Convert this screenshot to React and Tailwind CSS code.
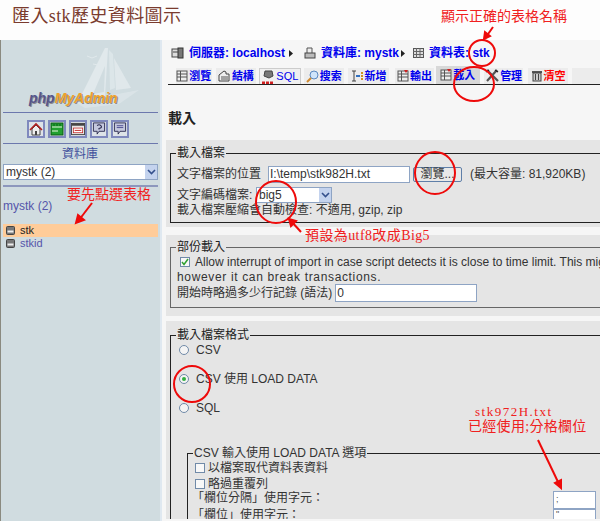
import React from 'react';

const SANS = "font-['Liberation_Sans','Noto_Sans_CJK_TC',sans-serif]";
const SERIF = "font-['Liberation_Serif','Noto_Sans_CJK_TC',serif]";

const Ship = () => (
  <svg width="72" height="66" viewBox="0 0 72 66" className="absolute left-[66px] top-[4px]">
    <g fill="#e1e9ec">
      <polygon points="36,4 39,4 36,52 12,52" />
      <polygon points="45,14 47,46 62,44" opacity="0.9" />
      <polygon points="36,22 24,50 35,48" fill="#d0dce0" />
      <polygon points="40,6 44,10 46,44 41,46" opacity="0.7" />
      <polygon points="6,58 70,46 50,60 16,64" opacity="0.55" />
    </g>
    <path d="M18 12l5 2 5-2M24 20l5 1" stroke="#e1e9ec" fill="none" />
  </svg>
);

const NavButton = ({ children }) => (
  <div className="w-[18px] h-[18px] border-2 border-[#7f89bd] bg-[#dde3e8] flex items-center justify-center">
    {children}
  </div>
);

const HomeIcon = () => (
  <svg width="14" height="14" viewBox="0 0 14 14">
    <path d="M3 7v6h8V7L7 3z" fill="#eee" stroke="#444" />
    <path d="M1 8l6-6 6 6" fill="none" stroke="#b02020" strokeWidth="1.6" />
    <rect x="6" y="9" width="2" height="4" fill="#444" />
  </svg>
);
const GridIcon = () => (
  <svg width="14" height="14" viewBox="0 0 14 14">
    <rect x="1" y="1" width="12" height="12" fill="#22a030" stroke="#0a5a14" />
    <path d="M2 5h10M2 9h6" stroke="#e8f8e0" />
    <path d="M4 2v2M7 2v2M10 2v2" stroke="#0a5a14" />
  </svg>
);
const SqlWindow = () => (
  <svg width="15" height="14" viewBox="0 0 15 14">
    <rect x="0.5" y="1" width="14" height="12" fill="#e8e8e8" stroke="#444" />
    <rect x="1" y="1" width="13" height="2.5" fill="#444" />
    <rect x="2.5" y="6" width="10" height="5" fill="#fff" stroke="#c02020" strokeWidth="0.8" />
    <path d="M4 8.5h7" stroke="#c02020" />
  </svg>
);
const Bubble = ({ mark }) => (
  <svg width="15" height="15" viewBox="0 0 15 15">
    <path d="M1.5 1.5h12v9h-6l-2 3v-3h-4z" fill="#c4c8de" stroke="#2c2c50" />
    {mark === 'q' ? (
      <path d="M5.5 4.5q2-2 4 0t-2 3v1" fill="none" stroke="#2c2c50" strokeWidth="1.2" />
    ) : (
      <path d="M4 4.5h7M4 6.5h7" stroke="#4a4a90" />
    )}
  </svg>
);
const TableRowIcon = () => (
  <svg width="9" height="9" viewBox="0 0 9 9">
    <rect x="0.5" y="0.5" width="8" height="8" rx="1" fill="#777" stroke="#444" />
    <rect x="1.5" y="4.5" width="6" height="2" fill="#eee" />
  </svg>
);

const Sidebar = () => (
  <div className="w-[160px] shrink-0 bg-[#d0dce0] border-l border-[#8a8a80] flex flex-col">
    <div className="relative h-[73px] mx-[2px] border-b border-[#6c78ad]">
      <Ship />
      <div className="absolute left-[26px] top-[50px] text-[14px] leading-4 font-bold italic whitespace-nowrap font-['Liberation_Sans',sans-serif] [text-shadow:1px_1px_0_#8c8c90]">
        <span className="text-[#56568c]">php</span>
        <span className="text-[#eda22d]">MyAdmin</span>
      </div>
    </div>
    <div className="h-[31px] mx-[2px] border-b border-[#6c78ad] flex items-center pl-[24px] pt-[1px] gap-[3px]">
      <NavButton><HomeIcon /></NavButton>
      <NavButton><GridIcon /></NavButton>
      <NavButton><SqlWindow /></NavButton>
      <NavButton><Bubble mark="q" /></NavButton>
      <NavButton><Bubble mark="s" /></NavButton>
    </div>
    <div className="text-center text-[12px] leading-[20px] text-[#40509c] pr-[1px]">資料庫</div>
    <div className="h-[16px] mx-[2px] bg-white border border-[#8ea4c4] flex items-center justify-between pl-[2px] text-[12px] text-[#333]">
      <span>mystk (2)</span>
      <span className="w-[12px] h-[14px] bg-[#c4d3ee] flex items-center justify-center">
        <svg width="9" height="6" viewBox="0 0 9 6"><path d="M1 1l3.5 3.5L8 1" fill="none" stroke="#34508c" strokeWidth="1.6" /></svg>
      </span>
    </div>
    <div className="mx-[2px] mt-[5px] border-t-2 border-[#8d97bd]" />
    <div className="ml-[2px] mt-[11px] text-[12px] leading-4 text-[#5555aa]">mystk (2)</div>
    <div className="mt-[10px] mx-[2px] h-[13px] bg-[#ffcc99] flex items-center gap-[5px] pl-[3px] text-[11px] text-[#222]">
      <TableRowIcon />
      <span>stk</span>
    </div>
    <div className="mx-[2px] h-[12px] flex items-center gap-[5px] pl-[3px] text-[11px] text-[#5555aa]">
      <TableRowIcon />
      <span>stkid</span>
    </div>
  </div>
);

const Crumb = ({ icon, label }) => (
  <div className="flex items-center gap-[5px]">
    {icon}
    <span>{label}</span>
  </div>
);
const Triangle = ({ className }) => (
  <svg width="4" height="7" viewBox="0 0 4 7" className={`mt-[1px] ${className}`}><path d="M0 0l4 3.5L0 7z" fill="#222" /></svg>
);
const ServerIcon = () => (
  <svg width="13" height="12" viewBox="0 0 13 12">
    <rect x="1" y="2" width="7" height="8" fill="#ddd" stroke="#444" />
    <rect x="7" y="1" width="5" height="10" fill="#777" stroke="#333" />
    <path d="M2 5h5" stroke="#444" />
  </svg>
);
const DbIcon = () => (
  <svg width="12" height="12" viewBox="0 0 12 12">
    <path d="M3 1h5v6H3z" fill="#eee" stroke="#555" />
    <rect x="1" y="6" width="10" height="5" fill="#bbb" stroke="#444" />
  </svg>
);
const TableIcon = () => (
  <svg width="11" height="10" viewBox="0 0 11 10">
    <rect x="0.5" y="0.5" width="10" height="9" fill="#ddd" stroke="#555" />
    <path d="M0 3.5h11M0 6.5h11M3.5 0v10M7 0v10" stroke="#666" />
  </svg>
);

const ListIcon = ({ red }) => (
  <svg width="12" height="12" viewBox="0 0 12 12">
    <rect x="1" y="1" width="10" height="10" fill="#eee" stroke="#555" />
    <path d="M1 4h10M1 7h10M4.5 1v10" stroke="#555" />
    {red && <path d="M7 0h4L9 3z" fill="#d02020" />}
  </svg>
);
const StructIcon = () => (
  <svg width="13" height="12" viewBox="0 0 13 12">
    <path d="M1 5l5-4 2 1v2h3v7H1z" fill="#eee" stroke="#444" />
    <path d="M3 7h7M3 9h7" stroke="#555" />
  </svg>
);
const SqlTabIcon = () => (
  <svg width="14" height="14" viewBox="0 0 14 14">
    <path d="M4 1h7l1 5-4 2-5-2z" fill="#777" stroke="#444" />
    <path d="M1 13h12" stroke="#d02020" strokeWidth="3" strokeDasharray="3 1" />
  </svg>
);
const SearchIcon = () => (
  <svg width="13" height="13" viewBox="0 0 13 13">
    <circle cx="8" cy="5" r="4" fill="#cfe4fa" stroke="#5a88c0" />
    <path d="M5 8l-4 4" stroke="#d08a30" strokeWidth="2" />
  </svg>
);
const InsertIcon = () => (
  <svg width="13" height="12" viewBox="0 0 13 12">
    <path d="M3 1v10M1 1h4M1 11h4" stroke="#444" />
    <path d="M5 6h4" stroke="#3070c0" strokeWidth="2" />
    <path d="M10 3h2M10 6h2M10 9h2" stroke="#d09020" strokeWidth="2" />
  </svg>
);
const ToolsIcon = () => (
  <svg width="14" height="14" viewBox="0 0 14 14">
    <path d="M2 1l11 11M12 1L2 12" stroke="#555" strokeWidth="2.2" />
    <path d="M1 3l3-2M10 1l3 2" stroke="#222" strokeWidth="1.5" />
  </svg>
);
const TrashIcon = () => (
  <svg width="12" height="12" viewBox="0 0 12 12">
    <rect x="1" y="1" width="10" height="2" fill="#555" />
    <rect x="2" y="3" width="8" height="8" fill="#ccc" stroke="#444" />
    <path d="M4.5 4v6M7.5 4v6" stroke="#444" />
  </svg>
);

const tabs = [
  { label: '瀏覽', icon: <ListIcon />, box: 'w-[38px] h-[16px] bg-[#ececec]' },
  { label: '結構', icon: <StructIcon />, box: 'w-[43px] ml-[4px] h-[16px] bg-[#ececec]' },
  { label: 'SQL', icon: <SqlTabIcon />, box: 'w-[44px] ml-[3px] h-[16px] bg-[#f0f0f0] border border-b-0 border-[#ccc]', sql: true },
  { label: '搜索', icon: <SearchIcon />, box: 'w-[43px] ml-[3px] h-[16px] bg-[#ececec]' },
  { label: '新增', icon: <InsertIcon />, box: 'w-[44px] ml-[4px] h-[16px] bg-[#ececec]' },
  { label: '輸出', icon: <ListIcon red />, box: 'w-[41px] ml-[6px] h-[16px] bg-[#ececec]' },
  { label: '載入', icon: <ListIcon red />, box: 'w-[47px] ml-[2px] h-[18px] bg-[#d8d8d8]' },
  { label: '管理', icon: <ToolsIcon />, box: 'w-[42px] ml-[4px] h-[16px] bg-[#ececec]' },
  { label: '清空', icon: <TrashIcon />, box: 'w-[42px] ml-[5px] h-[16px] bg-[#ececec]', red: true },
  { label: '', icon: null, box: 'w-[30px] ml-[4px] h-[16px] bg-[#ececec]' },
];

const Tabs = () => (
  <div className="ml-[6px] flex items-end h-[18px] border-b border-[#222] box-content pl-[8px]">
    {tabs.map((t, i) => (
      <div
        key={i}
        className={`flex items-center justify-center gap-[1px] text-[11px] font-bold whitespace-nowrap ${t.box} ${t.red ? 'text-[#ff0000]' : 'text-[#0000ee]'}`}
      >
        {t.icon}
        <span className={t.sql ? 'font-normal text-[11px]' : ''}>{t.label}</span>
      </div>
    ))}
  </div>
);

const Group = ({ title, tone = 'border-[#222]', className, inner, children }) => (
  <div className={`bg-[#e5e5e5] pl-[4px] w-[480px] overflow-hidden ${className}`}>
    <fieldset className={`border ${tone} w-[470px] pl-[6px] ${inner}`}>
      <legend className="px-[1px] -ml-[1px] text-[12px] leading-[14px] text-[#222]">{title}</legend>
      {children}
    </fieldset>
  </div>
);

const TextBox = ({ value, className }) => (
  <div className={`bg-white border border-[#8ea4c4] flex items-center pl-[1px] text-[12px] text-[#333] ${className}`}>{value}</div>
);
const Check = ({ on }) => (
  <span className="w-[10px] h-[10px] bg-[#f8f8f8] border border-[#708aa8] flex items-center justify-center shrink-0">
    {on && <svg width="8" height="8" viewBox="0 0 8 8"><path d="M1 4l2 2.5L7 1" fill="none" stroke="#30a030" strokeWidth="1.5" /></svg>}
  </span>
);
const Radio = ({ on, label }) => (
  <div className="flex items-center gap-[7px] h-[14px] text-[12px] text-[#333] ml-[2px] whitespace-nowrap">
    <span className="w-[10px] h-[10px] rounded-full bg-[#f4f4f4] border border-[#708aa8] flex items-center justify-center">
      {on && <span className="w-[4px] h-[4px] rounded-full bg-[#30b040]" />}
    </span>
    {label}
  </div>
);

const Main = () => (
  <div className="flex-1 min-w-0 bg-[#f6f6f6] border-l-2 border-[#dfe8f0] overflow-hidden h-[481px]">
    <div className="h-[26px] pl-[9px] flex items-center text-[12px] font-bold text-[#0000ee] whitespace-nowrap">
      <Crumb icon={<ServerIcon />} label="伺服器: localhost" />
      <Triangle className="ml-[4px] mr-[11px]" />
      <Crumb icon={<DbIcon />} label="資料庫: mystk" />
      <Triangle className="ml-[2px] mr-[8px]" />
      <Crumb icon={<TableIcon />} label="資料表: stk" />
    </div>
    <Tabs />
    <div className="ml-[6px] mt-[24px] h-[18px] text-[14px] leading-[18px] font-bold text-[#222]">載入</div>
    <div className="mt-[13px]">
      <Group title="載入檔案" className="h-[87px] ml-[4px] pt-[6px]" inner="pb-[4px]">
        <div className="flex items-center text-[12px] text-[#333] whitespace-nowrap h-[18px] mt-[5px]">
          <span className="w-[91px]">文字檔案的位置</span>
          <TextBox value="I:\temp\stk982H.txt" className="w-[142px] h-[17px]" />
          <span className="ml-[3px] w-[49px] h-[15px] bg-[#e8e8e8] border border-[#5f7fa8] rounded-[2px] flex items-center justify-center">瀏覽...</span>
          <span className="ml-[8px]">(最大容量: 81,920KB)</span>
        </div>
        <div className="flex items-center text-[12px] text-[#333] whitespace-nowrap h-[16px] mt-[4px]">
          <span className="w-[79px]">文字編碼檔案:</span>
          <div className="w-[76px] h-[16px] bg-white border border-[#8ea4c4] flex items-center justify-between pl-[2px]">
            <span>big5</span>
            <span className="w-[12px] h-[14px] bg-[#c4d3ee] flex items-center justify-center">
              <svg width="9" height="6" viewBox="0 0 9 6"><path d="M1 1l3.5 3.5L8 1" fill="none" stroke="#34508c" strokeWidth="1.6" /></svg>
            </span>
          </div>
        </div>
        <div className="text-[12px] leading-[15px] text-[#333] whitespace-nowrap">載入檔案壓縮會自動檢查: 不適用, gzip, zip</div>
      </Group>
      <Group title="部份載入" tone="border-[#666]" className="h-[81px] ml-[4px] mt-[8px] pt-[5px]" inner="pb-[5px]">
        <div className="flex items-center gap-[5px] ml-[3px] h-[16px] text-[12px] text-[#333] whitespace-nowrap">
          <Check on />
          <span>Allow interrupt of import in case script detects it is close to time limit. This might be a good way to import large files,</span>
        </div>
        <div className="text-[12px] leading-[14px] tracking-[0.65px] text-[#333] whitespace-nowrap">however it can break transactions.</div>
        <div className="flex items-center gap-[3px] text-[12px] text-[#333] whitespace-nowrap h-[18px]">
          <span>開始時略過多少行記錄 (語法)</span>
          <TextBox value="0" className="w-[142px] h-[18px]" />
        </div>
      </Group>
      <Group title="載入檔案格式" className="h-[198px] ml-[4px] mt-[5px] pt-[7px]" inner="h-[260px]">
        <div className="flex flex-col gap-[15px] mt-[1px]">
          <Radio label="CSV" />
          <Radio on label="CSV 使用 LOAD DATA" />
          <Radio label="SQL" />
        </div>
        <fieldset className="border border-[#222] ml-[10px] mt-[31px] h-[160px] pl-[7px] w-[440px]">
          <legend className="px-[1px] -ml-[2px] text-[12px] leading-[14px] text-[#333] whitespace-nowrap">CSV 輸入使用 LOAD DATA 選項</legend>
          <div className="flex items-center gap-[3px] h-[16px] text-[12px] text-[#333]"><Check />以檔案取代資料表資料</div>
          <div className="flex items-center gap-[3px] h-[15px] text-[12px] text-[#333]"><Check />略過重覆列</div>
          <div className="flex items-start">
            <div className="w-[361px] text-[12px] text-[#333] whitespace-nowrap -ml-[3px]">
              <div className="h-[17px] leading-[15px]">「欄位分隔」使用字元：</div>
              <div className="h-[17px] leading-[15px]">「欄位」使用字元：</div>
            </div>
            <div className="flex flex-col">
              <div className="w-[43px] h-[18px] bg-white border border-[#8ea4c4] text-[9px] leading-[9px] pl-[2px] pt-[3px] text-[#555]">;</div>
              <div className="w-[43px] h-[18px] bg-white border border-[#8ea4c4] text-[9px] leading-[9px] pl-[2px] text-[#555]">"</div>
            </div>
          </div>
        </fieldset>
      </Group>
    </div>
  </div>
);

const Note = ({ className, children }) => (
  <div className={`absolute text-[#f02020] whitespace-nowrap ${SERIF} ${className}`}>{children}</div>
);

const Markup = () => (
  <>
    <svg width="600" height="521" viewBox="0 0 600 521" className="absolute inset-0 pointer-events-none" fill="none" stroke="#ee0a0a" strokeWidth="2">
      <ellipse cx="482" cy="53" rx="13" ry="13" />
      <ellipse cx="474" cy="84" rx="20" ry="17" />
      <ellipse cx="435" cy="173" rx="20" ry="21" />
      <ellipse cx="276" cy="202" rx="20" ry="21" />
      <ellipse cx="192" cy="384" rx="18" ry="18" />
      <g fill="#ee0a0a">
        <path d="M493 27l-7 10" />
        <path d="M484 39l1-7 5 4z" />
        <path d="M301 232l-10-11" />
        <path d="M289 219l7 2-5 5z" />
        <path d="M92 203l-13 17" />
        <path d="M76 223l2-8 6 5z" />
        <path d="M538 440l21 44" />
        <path d="M561 488l-6-5 6-3z" />
      </g>
    </svg>
    <Note className="left-[441px] top-[8px] text-[14px] leading-[18px]">顯示正確的表格名稱</Note>
    <Note className="left-[305px] top-[227px] text-[14px] leading-[18px] tracking-[0.4px]">預設為utf8改成Big5</Note>
    <Note className="left-[67px] top-[186px] text-[14px] leading-[18px]">要先點選表格</Note>
    <Note className="left-[475px] top-[404px] text-[13px] leading-4 tracking-[1.5px]">stk972H.txt</Note>
    <Note className="left-[468px] top-[419px] text-[14px] leading-4 tracking-[0.3px]">已經使用;分格欄位</Note>
  </>
);

export default function App() {
  return (
    <div className={`relative w-[600px] h-[521px] overflow-hidden bg-[#fdfdfd] ${SANS}`}>
      <div className={`h-[40px] pl-[12px] pt-[6px] text-[18px] leading-5 tracking-[0.4px] text-[#7a3b2e] ${SERIF}`}>匯入stk歷史資料圖示</div>
      <div className="flex">
        <Sidebar />
        <Main />
      </div>
      <Markup />
    </div>
  );
}
